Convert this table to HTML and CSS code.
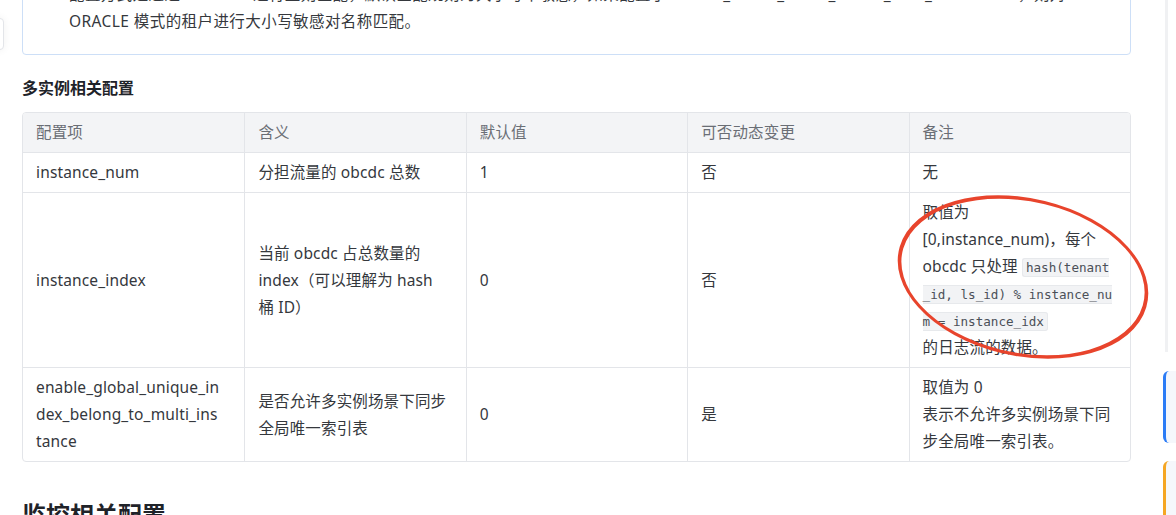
FILE: index.html
```html
<!DOCTYPE html>
<html lang="zh-CN">
<head>
<meta charset="utf-8">
<title>多实例相关配置</title>
<link rel="stylesheet" href="styles.css">
</head>
<body>
<div class="side-handle"></div>
<main class="doc">
  <div class="note">
    <p>配置方式是通过 fnmatch 进行正则匹配，默认匹配规则为大小写不敏感，如果配置了 enable_oracle_mode_match_case_sensitive=1，则对 ORACLE 模式的租户进行大小写敏感对名称匹配。</p>
  </div>

  <h3 class="sub">多实例相关配置</h3>

  <div class="table-area">
    <div class="table-wrap">
      <table class="cfg">
        <thead>
          <tr><th>配置项</th><th>含义</th><th>默认值</th><th>可否动态变更</th><th>备注</th></tr>
        </thead>
        <tbody>
          <tr>
            <td>instance_num</td>
            <td>分担流量的 obcdc 总数</td>
            <td>1</td>
            <td>否</td>
            <td>无</td>
          </tr>
          <tr>
            <td>instance_index</td>
            <td>当前 obcdc 占总数量的 index（可以理解为 hash 桶 ID）</td>
            <td>0</td>
            <td>否</td>
            <td>取值为<br>[0,instance_num)，每个 obcdc 只处理 <code>hash(tenant<wbr>_id, ls_id) % instance_nu<wbr>m = instance_idx</code><br>的日志流的数据。</td>
          </tr>
          <tr>
            <td>enable_global_unique_in<wbr>dex_belong_to_multi_ins<wbr>tance</td>
            <td>是否允许多实例场景下同步全局唯一索引表</td>
            <td>0</td>
            <td>是</td>
            <td>取值为 0<br>表示不允许多实例场景下同步全局唯一索引表。</td>
          </tr>
        </tbody>
      </table>
    </div>
    <svg class="mark" width="260" height="172" viewBox="0 0 260 172" aria-hidden="true">
      <ellipse cx="0" cy="0" rx="121" ry="80" transform="translate(131 85) skewX(17)" fill="none" stroke="#e8442c" stroke-width="3.5"/>
    </svg>
  </div>

  <h2 class="section">监控相关配置</h2>
</main>

<div class="rail-line"></div>
<div class="float-tab blue"></div>
<div class="float-tab orange"></div>
</body>
</html>
```

FILE: styles.css
```css
* { box-sizing: border-box; }

html, body {
  margin: 0;
  background: #ffffff;
}

body {
  position: relative;
  width: 1176px;
  height: 515px;
  overflow: hidden;
  font-family: "Noto Sans", "Noto Sans CJK SC", sans-serif;
  font-size: 15.5px;
  letter-spacing: 0.15px;
  color: #35383d;
}

.side-handle {
  position: absolute;
  left: -30px;
  top: 18px;
  width: 34px;
  height: 32px;
  border: 1px solid #e3e5e9;
  border-radius: 4px;
  background: #fff;
  box-shadow: 0 0 8px rgba(0, 0, 0, 0.06);
}

.doc {
  width: 1131px;
  padding-left: 22px;
}

.note {
  margin-top: -36px;
  border: 1px solid #cddff7;
  border-radius: 4px;
  padding: 16px 40px 19px 46px;
  line-height: 27px;
  letter-spacing: 0.42px;
}

.note p { margin: 0; }

.sub {
  margin: 21px 0 12px;
  font-size: 16px;
  line-height: 24px;
  font-weight: 700;
  color: #1f2329;
  letter-spacing: 0;
}

.table-area { position: relative; }

.table-wrap {
  border: 1px solid #e3e5e9;
  border-radius: 4px;
  overflow: hidden;
}

.cfg {
  width: 100%;
  border-collapse: separate;
  border-spacing: 0;
  table-layout: fixed;
}

.cfg th,
.cfg td {
  width: 20%;
  padding: 6px 14px 6px 13px;
  line-height: 27px;
  text-align: left;
  vertical-align: middle;
  font-weight: 400;
  border-left: 1px solid #e3e5e9;
  border-bottom: 1px solid #e3e5e9;
}

.cfg th:first-child,
.cfg td:first-child { border-left: 0; }

.cfg tbody tr:last-child td { border-bottom: 0; }

.cfg th {
  background: #f3f4f6;
  color: #6a6e75;
}

.cfg code {
  font-family: "DejaVu Sans Mono", monospace;
  font-size: 12.6px;
  line-height: 1;
  letter-spacing: 0;
  color: #4b5058;
  background: #f2f3f5;
  border: 1px solid #e7e9ec;
  border-radius: 3px;
  padding: 1px 3px;
}

.mark {
  position: absolute;
  left: 870px;
  top: 80px;
  overflow: visible;
  pointer-events: none;
}

.section {
  margin: 37px 0 0;
  font-size: 24px;
  line-height: 32px;
  font-weight: 700;
  color: #1f2329;
  letter-spacing: 0;
}

.rail-line {
  position: absolute;
  left: 1165px;
  top: 0;
  width: 3px;
  height: 352px;
  background: #f0f1f3;
}

.float-tab {
  position: absolute;
  left: 1163px;
  width: 20px;
  border-left: 3px solid;
  border-radius: 6px 0 0 6px;
  background: #f5f7fb;
}

.float-tab.blue {
  top: 371px;
  height: 72px;
  border-color: #2b7cf6;
}

.float-tab.orange {
  top: 461px;
  height: 70px;
  border-color: #f5a623;
}
```
